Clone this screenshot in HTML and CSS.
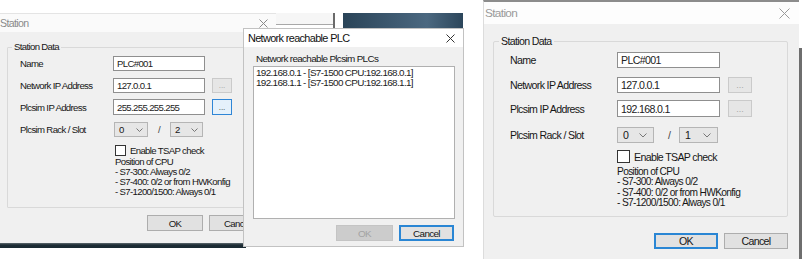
FILE: index.html
```html
<!DOCTYPE html>
<html lang="en">
<head>
<meta charset="utf-8">
<title>Station</title>
<link rel="stylesheet" href="styles.css">
</head>
<body>
<div class="page">
  <div class="scene-left">
    <div class="backwin"></div>
    <div class="backline"></div>
    <div class="desk-top"></div>
    <div class="desk-bottom"></div>

    <div class="win-station-l">
      <div class="tb-l">
        <span class="title-l">Station</span>
        <svg class="x-l" width="9" height="9" viewBox="0 0 9 9"><path d="M0.5 0.5 L8.5 8.5 M8.5 0.5 L0.5 8.5" stroke="#8a8a8a" stroke-width="1" fill="none"/></svg>
      </div>
      <div class="body-l">
        <div class="group-l">
          <span class="legend-l">Station Data</span>
          <div class="row-l">
            <span class="lbl-l">Name</span>
            <span class="field-l">PLC#001</span>
          </div>
          <div class="row-l mt7">
            <span class="lbl-l">Network IP Address</span>
            <span class="field-l">127.0.0.1</span>
            <span class="dots-l">...</span>
          </div>
          <div class="row-l mt6 h16">
            <span class="lbl-l">Plcsim IP Address</span>
            <span class="field-l">255.255.255.255</span>
            <span class="dots-l focus">...</span>
          </div>
          <div class="row-l mt7">
            <span class="lbl-l">Plcsim Rack / Slot</span>
            <span class="combo-l c1">0<svg width="7" height="4" viewBox="0 0 7 4"><polyline points="0.5,0.5 3.5,3.5 6.5,0.5" fill="none" stroke="#777" stroke-width="1"/></svg></span>
            <span class="slash-l">/</span>
            <span class="combo-l c2">2<svg width="7" height="4" viewBox="0 0 7 4"><polyline points="0.5,0.5 3.5,3.5 6.5,0.5" fill="none" stroke="#777" stroke-width="1"/></svg></span>
          </div>
          <div class="chk-row-l">
            <span class="chk-l"></span>
            <span>Enable TSAP check</span>
          </div>
          <div class="info-l">
            <div>Position of CPU</div>
            <div>- S7-300: Always 0/2</div>
            <div>- S7-400: 0/2 or from HWKonfig</div>
            <div>- S7-1200/1500: Always 0/1</div>
          </div>
        </div>
        <div class="actions-l">
          <span class="btn-l">OK</span>
          <span class="btn-l">Cancel</span>
        </div>
      </div>
    </div>

    <div class="win-plc">
      <div class="tb-plc">
        <span>Network reachable PLC</span>
        <svg class="x-plc" width="9" height="9" viewBox="0 0 9 9"><path d="M0.5 0.5 L8.5 8.5 M8.5 0.5 L0.5 8.5" stroke="#333" stroke-width="1" fill="none"/></svg>
      </div>
      <div class="body-plc">
        <div class="lbl-plc">Network reachable Plcsim PLCs</div>
        <div class="list-plc">
          <div>192.168.0.1 - [S7-1500 CPU:192.168.0.1]</div>
          <div>192.168.1.1 - [S7-1500 CPU:192.168.1.1]</div>
        </div>
        <div class="actions-plc">
          <span class="btn-plc disabled">OK</span>
          <span class="btn-plc focus">Cancel</span>
        </div>
      </div>
    </div>
  </div>

  <div class="scene-right">
    <div class="dlg-r">
      <div class="tb-r">
        <span class="title-r">Station</span>
        <svg class="x-r" width="11" height="11" viewBox="0 0 11 11"><path d="M0.5 0.5 L10.5 10.5 M10.5 0.5 L0.5 10.5" stroke="#9a9a9a" stroke-width="1" fill="none"/></svg>
      </div>
      <div class="body-r">
        <div class="group-r">
          <span class="legend-r">Station Data</span>
          <div class="row-r">
            <span class="lbl-r">Name</span>
            <span class="field-r">PLC#001</span>
          </div>
          <div class="row-r mt9">
            <span class="lbl-r">Network IP Address</span>
            <span class="field-r">127.0.0.1</span>
            <span class="dots-r">...</span>
          </div>
          <div class="row-r mt7 h17">
            <span class="lbl-r">Plcsim IP Address</span>
            <span class="field-r">192.168.0.1</span>
            <span class="dots-r">...</span>
          </div>
          <div class="row-r mt10">
            <span class="lbl-r">Plcsim Rack / Slot</span>
            <span class="combo-r c1">0<svg width="8" height="5" viewBox="0 0 8 5"><polyline points="0.5,0.5 4,4 7.5,0.5" fill="none" stroke="#777" stroke-width="1"/></svg></span>
            <span class="slash-r">/</span>
            <span class="combo-r c2">1<svg width="8" height="5" viewBox="0 0 8 5"><polyline points="0.5,0.5 4,4 7.5,0.5" fill="none" stroke="#777" stroke-width="1"/></svg></span>
          </div>
          <div class="chk-row-r">
            <span class="chk-r"></span>
            <span>Enable TSAP check</span>
          </div>
          <div class="info-r">
            <div>Position of CPU</div>
            <div>- S7-300: Always 0/2</div>
            <div>- S7-400: 0/2 or from HWKonfig</div>
            <div>- S7-1200/1500: Always 0/1</div>
          </div>
        </div>
        <div class="actions-r">
          <span class="btn-r focus">OK</span>
          <span class="btn-r">Cancel</span>
        </div>
      </div>
    </div>
    <div class="edge-r"></div>
  </div>
</div>
</body>
</html>
```

FILE: styles.css
```css
html, body {
  margin: 0;
  padding: 0;
  background: #ffffff;
}
body {
  width: 802px;
  height: 259px;
  overflow: hidden;
  font-family: "Liberation Sans", Arial, sans-serif;
  letter-spacing: -0.65px;
  color: #161616;
}
.page {
  display: flex;
  width: 802px;
  height: 259px;
}

/* ---------- left scene (desktop with overlapping windows) ---------- */
.scene-left {
  position: relative;
  flex: none;
  width: 482px;
  height: 259px;
  font-size: 9.6px;
}
.backwin {
  position: absolute;
  left: 275px;
  top: 13px;
  width: 58px;
  height: 11px;
  background: #f6f6f6;
  border-left: 1px solid #b8b8b8;
  border-bottom: 1px solid #a8a8a8;
}
.backline {
  position: absolute;
  left: 333px;
  top: 13px;
  width: 2px;
  height: 15px;
  background: #6a6a6a;
}
.desk-top {
  position: absolute;
  left: 343px;
  top: 13px;
  width: 120px;
  height: 15px;
  background: linear-gradient(90deg, #2a4458 0%, #3f5b72 45%, #4b6880 70%, #2c465b 100%);
}
.desk-bottom {
  position: absolute;
  left: 0;
  top: 243px;
  width: 246px;
  height: 5px;
  background: linear-gradient(180deg, #5e6a70 0%, #1d2c35 40%, #1a2a33 100%);
}

.win-station-l {
  position: absolute;
  left: 0;
  top: 13px;
  width: 276px;
  height: 230px;
  display: flex;
  flex-direction: column;
}
.tb-l {
  height: 19px;
  box-sizing: border-box;
  border-top: 1px solid #e4e4e4;
  background: #fafafa;
  display: flex;
  align-items: center;
  justify-content: space-between;
  padding-right: 8px;
}
.title-l {
  font-size: 10.6px;
  color: #8a8a8a;
}
.body-l {
  flex: 1;
  background: #f0f0f0;
  padding: 15px 0 0 7px;
}
.group-l {
  position: relative;
  box-sizing: border-box;
  width: 290px;
  height: 161px;
  border: 1px solid #d9d9d9;
  border-radius: 1px;
  padding: 8px 0 0 12px;
}
.legend-l {
  position: absolute;
  left: 4px;
  top: -7px;
  padding: 0 2px;
  background: #f0f0f0;
  line-height: 12px;
}
.row-l {
  display: flex;
  align-items: center;
  height: 15px;
}
.row-l.h16 { height: 16px; }
.mt6 { margin-top: 6px; }
.mt7 { margin-top: 7px; }
.lbl-l {
  width: 93px;
  flex: none;
}
.field-l {
  box-sizing: border-box;
  width: 92px;
  height: 100%;
  background: #fff;
  border: 1px solid #8f8f8f;
  padding-left: 3px;
  display: flex;
  align-items: center;
  color: #222;
}
.dots-l {
  box-sizing: border-box;
  width: 20px;
  height: 100%;
  margin-left: 7px;
  background: #e6e6e6;
  border: 1px solid #cacaca;
  color: #a0a0a0;
  font-size: 8px;
  letter-spacing: 0;
  display: flex;
  align-items: center;
  justify-content: center;
}
.dots-l.focus {
  border: 1px solid #2f86d6;
  color: #333;
  background: #e5f1fb;
}
.combo-l {
  box-sizing: border-box;
  height: 100%;
  background: #e6e6e6;
  border: 1px solid #b5b5b5;
  display: flex;
  align-items: center;
  justify-content: space-between;
  padding: 0 4px 0 4px;
}
.combo-l.c1 { width: 34px; margin-left: 1px; }
.combo-l.c2 { width: 33px; }
.slash-l {
  width: 22px;
  text-align: center;
  color: #444;
}
.chk-row-l {
  display: flex;
  align-items: center;
  gap: 4px;
  margin: 8px 0 0 95px;
  height: 11px;
}
.chk-l {
  box-sizing: border-box;
  width: 11px;
  height: 11px;
  background: #fff;
  border: 1px solid #333;
}
.info-l {
  margin: 1px 0 0 95px;
  line-height: 10px;
}
.actions-l {
  display: flex;
  gap: 6px;
  margin: 7px 0 0 140px;
}
.btn-l {
  box-sizing: border-box;
  width: 56px;
  height: 16px;
  background: #e1e1e1;
  border: 1px solid #adadad;
  display: flex;
  align-items: center;
  justify-content: center;
}

/* Network reachable PLC dialog */
.win-plc {
  position: absolute;
  left: 243px;
  top: 28px;
  width: 221px;
  height: 219px;
  box-sizing: border-box;
  border: 1px solid #c2c2c2;
  display: flex;
  flex-direction: column;
  font-size: 9.9px;
}
.tb-plc {
  height: 18px;
  flex: none;
  background: #fff;
  display: flex;
  align-items: center;
  justify-content: space-between;
  padding: 0 8px 0 4px;
  font-size: 10.9px;
  color: #111;
}
.body-plc {
  flex: 1;
  background: #f0f0f0;
  padding: 7px 8px 0 9px;
  display: flex;
  flex-direction: column;
}
.lbl-plc {
  margin-left: 3px;
  line-height: 10px;
}
.list-plc {
  box-sizing: border-box;
  margin-top: 2px;
  height: 153px;
  background: #fff;
  border: 1px solid #b0b0b0;
  padding: 1px 2px;
  line-height: 10px;
  color: #222;
}
.actions-plc {
  display: flex;
  justify-content: flex-end;
  gap: 6px;
  margin: 6px 1px 0 0;
}
.btn-plc {
  box-sizing: border-box;
  height: 16px;
  display: flex;
  align-items: center;
  justify-content: center;
  background: #e1e1e1;
  border: 1px solid #adadad;
}
.btn-plc.disabled {
  width: 57px;
  background: #cccccc;
  border-color: #c4c4c4;
  color: #a3a3a3;
}
.btn-plc.focus {
  width: 55px;
  border: 2px solid #2a86d4;
}

/* ---------- right scene ---------- */
.scene-right {
  flex: none;
  width: 320px;
  height: 259px;
  box-sizing: border-box;
  padding-left: 1px;
  display: flex;
  font-size: 10.6px;
}
.dlg-r {
  width: 316px;
  height: 259px;
  box-sizing: border-box;
  border-top: 2px solid #8c8c8c;
  border-left: 1px solid #dcdcdc;
  display: flex;
  flex-direction: column;
}
.tb-r {
  height: 22px;
  flex: none;
  background: #fdfdfd;
  display: flex;
  align-items: center;
  justify-content: space-between;
  padding: 0 9px 0 1px;
}
.title-r {
  font-size: 11.8px;
  color: #9a9a9a;
}
.body-r {
  flex: 1;
  background: #f0f0f0;
  padding: 17px 0 0 9px;
}
.group-r {
  position: relative;
  box-sizing: border-box;
  width: 295px;
  height: 176px;
  border: 1px solid #d9d9d9;
  border-radius: 2px;
  padding: 10px 0 0 16px;
}
.legend-r {
  position: absolute;
  left: 5px;
  top: -8px;
  padding: 0 2px;
  background: #f0f0f0;
  line-height: 14px;
}
.row-r {
  display: flex;
  align-items: center;
  height: 16px;
}
.row-r.h17 { height: 17px; }
.mt9 { margin-top: 9px; }
.mt10 { margin-top: 10px; }
.lbl-r {
  width: 107px;
  flex: none;
}
.field-r {
  box-sizing: border-box;
  width: 103px;
  height: 100%;
  background: #fff;
  border: 1px solid #8f8f8f;
  padding-left: 3px;
  display: flex;
  align-items: center;
  color: #222;
}
.dots-r {
  box-sizing: border-box;
  width: 24px;
  height: 100%;
  margin-left: 8px;
  background: #e6e6e6;
  border: 1px solid #cacaca;
  color: #a8a8a8;
  font-size: 9px;
  letter-spacing: 0;
  display: flex;
  align-items: center;
  justify-content: center;
}
.combo-r {
  box-sizing: border-box;
  height: 100%;
  background: #e6e6e6;
  border: 1px solid #b5b5b5;
  display: flex;
  align-items: center;
  justify-content: space-between;
  padding: 0 6px 0 5px;
}
.combo-r.c1 { width: 37px; }
.combo-r.c2 { width: 39px; }
.slash-r {
  width: 25px;
  box-sizing: border-box;
  padding-left: 14px;
  color: #444;
}
.chk-row-r {
  display: flex;
  align-items: center;
  gap: 4px;
  margin: 7px 0 0 107px;
  height: 13px;
}
.chk-r {
  box-sizing: border-box;
  width: 13px;
  height: 13px;
  background: #fff;
  border: 1px solid #333;
}
.info-r {
  margin: 4px 0 0 107px;
  font-size: 10.2px;
  line-height: 10.3px;
}
.actions-r {
  width: 295px;
  display: flex;
  justify-content: flex-end;
  gap: 6px;
  margin-top: 16px;
}
.btn-r {
  box-sizing: border-box;
  width: 64px;
  height: 16px;
  background: #e1e1e1;
  border: 1px solid #adadad;
  display: flex;
  align-items: center;
  justify-content: center;
}
.btn-r.focus {
  border: 1px solid #2a86d4;
  box-shadow: inset 0 0 0 1px #2a86d4;
}
.edge-r {
  width: 3px;
  margin-top: 48px;
  height: 211px;
  background: #6e6e6e;
}
```
